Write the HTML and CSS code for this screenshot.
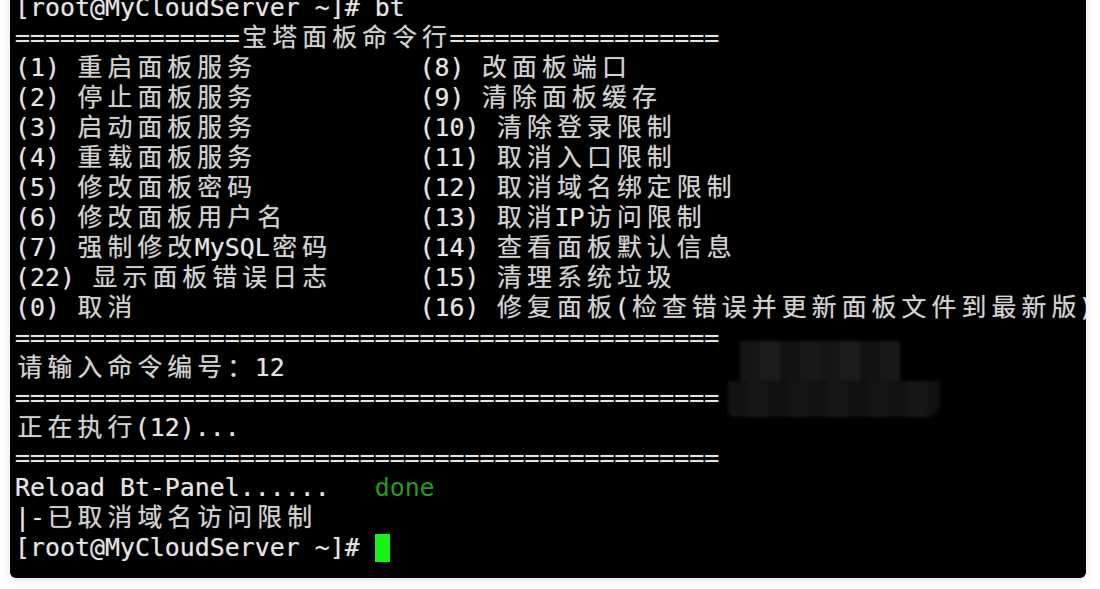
FILE: index.html
```html
<!DOCTYPE html>
<html lang="zh-CN">
<head>
  <meta charset="UTF-8" />
  <meta name="viewport" content="width=device-width, initial-scale=1.0"/>
  <title>宝塔面板命令行</title>
  <link rel="stylesheet" href="styles.css">
</head>
<body>

  <div class="frame">
    <div class="terminal">
      <div class="line">[root@MyCloudServer ~]# bt</div>
      <div class="line">===============<span class="zh">宝塔面板命令行</span>==================</div>

      <div class="menu">
        <div class="line">(1) <span class="zh">重启面板服务</span></div>
        <div class="line">(8) <span class="zh">改面板端口</span></div>
        <div class="line">(2) <span class="zh">停止面板服务</span></div>
        <div class="line">(9) <span class="zh">清除面板缓存</span></div>
        <div class="line">(3) <span class="zh">启动面板服务</span></div>
        <div class="line">(10) <span class="zh">清除登录限制</span></div>
        <div class="line">(4) <span class="zh">重载面板服务</span></div>
        <div class="line">(11) <span class="zh">取消入口限制</span></div>
        <div class="line">(5) <span class="zh">修改面板密码</span></div>
        <div class="line">(12) <span class="zh">取消域名绑定限制</span></div>
        <div class="line">(6) <span class="zh">修改面板用户名</span></div>
        <div class="line">(13) <span class="zh">取消</span>IP<span class="zh">访问限制</span></div>
        <div class="line">(7) <span class="zh">强制修改</span>MySQL<span class="zh">密码</span></div>
        <div class="line">(14) <span class="zh">查看面板默认信息</span></div>
        <div class="line">(22) <span class="zh">显示面板错误日志</span></div>
        <div class="line">(15) <span class="zh">清理系统垃圾</span></div>
        <div class="line">(0) <span class="zh">取消</span></div>
        <div class="line">(16) <span class="zh">修复面板</span>(<span class="zh">检查错误并更新面板文件到最新版</span>)</div>
      </div>

      <div class="line">===============================================</div>
      <div class="line"><span class="zh">请输入命令编号：</span>12</div>
      <div class="line">===============================================</div>
      <div class="line"><span class="zh">正在执行</span>(12)...</div>
      <div class="line">===============================================</div>
      <div class="line">Reload Bt-Panel......   <span class="ok">done</span></div>
      <div class="line">|-<span class="zh">已取消域名访问限制</span></div>
      <div class="line">[root@MyCloudServer ~]# <span class="cursor"></span></div>

      <!-- pixelated patch that hides something in the original capture -->
      <div class="mosaic mosaic-top"></div>
      <div class="mosaic mosaic-bottom"></div>
    </div>
  </div>

</body>
</html>
```

FILE: styles.css
```css
:root {
  --term-bg: #000000;
  --term-fg: #e4e4e4;
  --term-green: #239a23;
  --cursor: #19f219;
  --wide-gap: calc(2ch - 1em);
}

body {
  margin: 0;
  background-color: #ffffff;
  overflow: hidden;
}

.frame {
  padding: 0 14px 11px 10px;
}

.terminal {
  position: relative;
  margin-top: -7px;
  padding: 0 0 15px 5px;
  background-color: var(--term-bg);
  color: var(--term-fg);
  font-family: "DejaVu Sans Mono", "Noto Sans CJK SC", monospace;
  font-size: 24.9px;
  line-height: 30px;
  text-shadow: 0 0 1px rgba(255, 255, 255, 0.45);
  overflow: hidden;
  border-radius: 0 0 6px 6px;
  box-shadow: 0 2px 8px rgba(0, 0, 0, 0.12);
}

.line {
  height: 30px;
  white-space: pre;
}

/* CJK glyphs take two terminal cells, glyph centred in them */
.zh {
  letter-spacing: var(--wide-gap);
  padding-left: calc(var(--wide-gap) / 2);
  margin-right: calc(var(--wide-gap) / -2);
  color: #d2d2d2;
}

.menu {
  display: grid;
  grid-template-columns: 27ch 1fr;
}

.ok {
  color: var(--term-green);
  text-shadow: none;
}

.cursor {
  display: inline-block;
  width: 1ch;
  height: 28px;
  vertical-align: -6px;
  background-color: var(--cursor);
}

.mosaic {
  position: absolute;
  filter: blur(1.5px);
}

.mosaic-top {
  left: 730px;
  top: 348px;
  width: 160px;
  height: 42px;
  background: repeating-linear-gradient(90deg, #151515 0 20px, #1c1c1c 20px 40px, #121212 40px 60px, #191919 60px 80px);
}

.mosaic-bottom {
  left: 718px;
  top: 388px;
  width: 212px;
  height: 36px;
  border-radius: 0 0 14px 6px;
  background: repeating-linear-gradient(90deg, #121212 0 20px, #171717 20px 40px, #101010 40px 60px, #151515 60px 80px);
}
```
